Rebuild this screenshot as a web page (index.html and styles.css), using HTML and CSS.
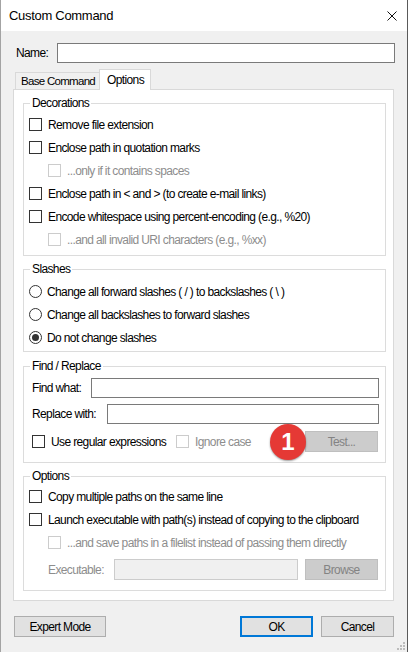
FILE: index.html
```html
<!DOCTYPE html>
<html>
<head>
<meta charset="utf-8">
<title>Custom Command</title>
<link rel="stylesheet" href="styles.css">
</head>
<body>
<div class="window">
  <div class="titlebar">
    <span class="title">Custom Command</span>
    <span class="close"><svg width="10" height="10" viewBox="0 0 10 10"><path d="M0.5 0.5L9.5 9.5M9.5 0.5L0.5 9.5" stroke="#111" stroke-width="1"/></svg></span>
  </div>
  <div class="client">
    <div class="name-row"><span class="name-label">Name:</span><div class="textbox name-box"></div></div>
    <div class="tabs"><div class="tab base">Base Command</div><div class="tab active">Options</div></div>
    <div class="panel">
      <fieldset class="group deco">
        <legend>Decorations</legend>
        <div class="row"><span class="cb"></span><span>Remove file extension</span></div>
        <div class="row"><span class="cb"></span><span>Enclose path in quotation marks</span></div>
        <div class="row sub dis-text"><span class="cb dis"></span><span>...only if it contains spaces</span></div>
        <div class="row"><span class="cb"></span><span>Enclose path in &lt; and &gt; (to create e-mail links)</span></div>
        <div class="row"><span class="cb"></span><span>Encode whitespace using percent-encoding (e.g., %20)</span></div>
        <div class="row sub dis-text"><span class="cb dis"></span><span>...and all invalid URI characters (e.g., %xx)</span></div>
      </fieldset>
      <fieldset class="group slashes">
        <legend>Slashes</legend>
        <div class="row"><span class="rb"></span><span>Change all forward slashes ( / ) to backslashes ( \ )</span></div>
        <div class="row"><span class="rb"></span><span>Change all backslashes to forward slashes</span></div>
        <div class="row"><span class="rb on"></span><span>Do not change slashes</span></div>
      </fieldset>
      <fieldset class="group find">
        <legend>Find / Replace</legend>
        <div class="fr">
          <div class="fr-row"><span class="fr-label find-l">Find what:</span><div class="textbox fr-input"></div></div>
          <div class="fr-row"><span class="fr-label repl-l">Replace with:</span><div class="textbox fr-input"></div></div>
          <div class="fr-checks">
            <div class="chk-item regex"><span class="cb"></span><span>Use regular expressions</span></div>
            <div class="chk-item dis-text"><span class="cb dis"></span><span>Ignore case</span></div>
            <div class="test-wrap">
              <span class="badge">1</span>
              <div class="btn dis test">Test...</div>
            </div>
          </div>
        </div>
      </fieldset>
      <fieldset class="group opts">
        <legend>Options</legend>
        <div class="row"><span class="cb"></span><span>Copy multiple paths on the same line</span></div>
        <div class="row"><span class="cb"></span><span>Launch executable with path(s) instead of copying to the clipboard</span></div>
        <div class="row sub dis-text"><span class="cb dis"></span><span>...and save paths in a filelist instead of passing them directly</span></div>
        <div class="exec">
          <span class="exec-label dis-text">Executable:</span>
          <div class="textbox dis exec-input"></div>
          <div class="btn dis browse">Browse</div>
        </div>
      </fieldset>
    </div>
    <div class="footer">
      <div class="btn expert">Expert Mode</div>
      <div class="btn ok">OK</div>
      <div class="btn cancel">Cancel</div>
    </div>
  </div>
  <svg class="grip" width="10" height="10" viewBox="0 0 10 10">
    <rect x="7" y="1" width="2" height="2" fill="#bcbcbc"/>
    <rect x="4" y="4" width="2" height="2" fill="#bcbcbc"/>
    <rect x="7" y="4" width="2" height="2" fill="#bcbcbc"/>
    <rect x="1" y="7" width="2" height="2" fill="#bcbcbc"/>
    <rect x="4" y="7" width="2" height="2" fill="#bcbcbc"/>
    <rect x="7" y="7" width="2" height="2" fill="#bcbcbc"/>
  </svg>
</div>
</body>
</html>
```

FILE: styles.css
```css
* { box-sizing: border-box; }
body {
  margin: 0;
  background: #ffffff;
  font-family: "Liberation Sans", Arial, sans-serif;
  font-size: 12px;
  letter-spacing: -0.62px;
  color: #000;
}
.window {
  position: relative;
  width: 408px;
  height: 652px;
  background: #f0f0f0;
  border-left: 1px solid #a3a3a3;
  border-right: 1px solid #5a5a5a;
  display: flex;
  flex-direction: column;
}
.titlebar {
  height: 31px;
  flex: none;
  background: #fff;
  display: flex;
  align-items: center;
  justify-content: space-between;
  padding: 0 10px 0 8px;
}
.title { font-size: 13px; letter-spacing: -0.3px; }
.close { display: flex; width: 10px; height: 10px; }
.client {
  flex: 1;
  display: flex;
  flex-direction: column;
  padding: 0 13px 0 12px;
}
.name-row {
  display: flex;
  align-items: center;
  height: 20px;
  margin-top: 12px;
  margin-right: -1px;
  padding-left: 3px;
}
.name-label { width: 41px; flex: none; }
.textbox {
  height: 20px;
  background: #fff;
  border: 1px solid #7a7a7a;
}
.textbox.dis { background: #f0f0f0; border-color: #cccccc; }
.name-box { flex: 1; }

.tabs {
  display: flex;
  align-items: flex-end;
  height: 20px;
  margin-top: 6px;
  padding-left: 2px;
}
.tab {
  display: flex;
  align-items: center;
  flex: none;
  white-space: nowrap;
  border: 1px solid #d9d9d9;
  border-bottom: none;
  background: #f0f0f0;
}
.tab.base {
  width: 85px;
  height: 17px;
  padding-left: 5px;
  font-size: 11.5px;
  letter-spacing: -0.7px;
}
.tab.active {
  position: relative;
  z-index: 1;
  width: 52px;
  height: 21px;
  margin-left: -1px;
  margin-bottom: -1px;
  padding-left: 7px;
  padding-bottom: 1px;
  background: #fff;
}
.panel {
  border: 1px solid #d9d9d9;
  background: #fff;
  padding: 6px 7px 9px 9px;
}
.group {
  margin: 0;
  min-width: 0;
  border: 1px solid #dcdcdc;
  padding: 0 5px;
}
.group legend {
  padding: 0 2px;
  margin-left: 1px;
  line-height: 15px;
}
.deco { padding-top: 2px; padding-bottom: 4px; }
.slashes { margin-top: 6px; padding-top: 3px; padding-bottom: 2px; }
.find { margin-top: 7px; padding-top: 4px; padding-bottom: 10px; }
.opts { margin-top: 6px; padding-top: 1px; padding-bottom: 10px; }

.row { display: flex; align-items: center; height: 23px; white-space: nowrap; }
.sub { padding-left: 19px; }
.dis-text { color: #8d8d8d; }
.cb {
  flex: none;
  width: 13px;
  height: 13px;
  margin-right: 6px;
  border: 1px solid #333;
  background: #fff;
}
.cb.dis { border-color: #cccccc; }
.rb {
  flex: none;
  width: 13px;
  height: 13px;
  margin-right: 5px;
  border: 1px solid #333;
  border-radius: 50%;
  background: #fff;
  display: flex;
  align-items: center;
  justify-content: center;
}
.rb.on::after {
  content: "";
  width: 7px;
  height: 7px;
  border-radius: 50%;
  background: #333;
}

.fr { padding-left: 3px; }
.fr-row { display: flex; align-items: center; height: 20px; }
.fr-row + .fr-row { margin-top: 6px; }
.fr-label { flex: none; }
.find-l { width: 59px; }
.repl-l { width: 75px; }
.fr-input { flex: 1; margin-right: 1px; }
.fr-checks { display: flex; align-items: center; height: 21px; margin-top: 7px; white-space: nowrap; }
.chk-item { display: flex; align-items: center; }
.regex { width: 144px; }
.test-wrap { position: relative; margin-left: auto; margin-right: 2px; }
.badge {
  position: absolute;
  right: calc(100% - 1px);
  top: -7px;
  width: 36px;
  height: 36px;
  border-radius: 50%;
  background: #e53935;
  box-shadow: 0 1px 2px rgba(0, 0, 0, 0.4);
  color: #fff;
  font-weight: bold;
  font-size: 24px;
  letter-spacing: 0;
  display: flex;
  align-items: center;
  justify-content: center;
}

.btn {
  height: 21px;
  border: 1px solid #adadad;
  background: #e1e1e1;
  display: flex;
  align-items: center;
  justify-content: center;
  white-space: nowrap;
}
.btn.dis { background: #cccccc; border-color: #bfbfbf; color: #838383; }
.test { width: 73px; }

.exec { display: flex; align-items: center; height: 21px; margin-top: 5px; padding-left: 19px; }
.exec-label { width: 66px; flex: none; }
.exec-input { width: 184px; height: 21px; flex: none; }
.browse { width: 73px; margin-left: 7px; }

.footer { display: flex; margin-top: 15px; padding-left: 1px; }
.expert { width: 92px; }
.ok { width: 73px; margin-left: auto; border: 2px solid #0078d7; }
.cancel { width: 73px; margin-left: 8px; }

.grip { position: absolute; right: 1px; bottom: 1px; }
```
